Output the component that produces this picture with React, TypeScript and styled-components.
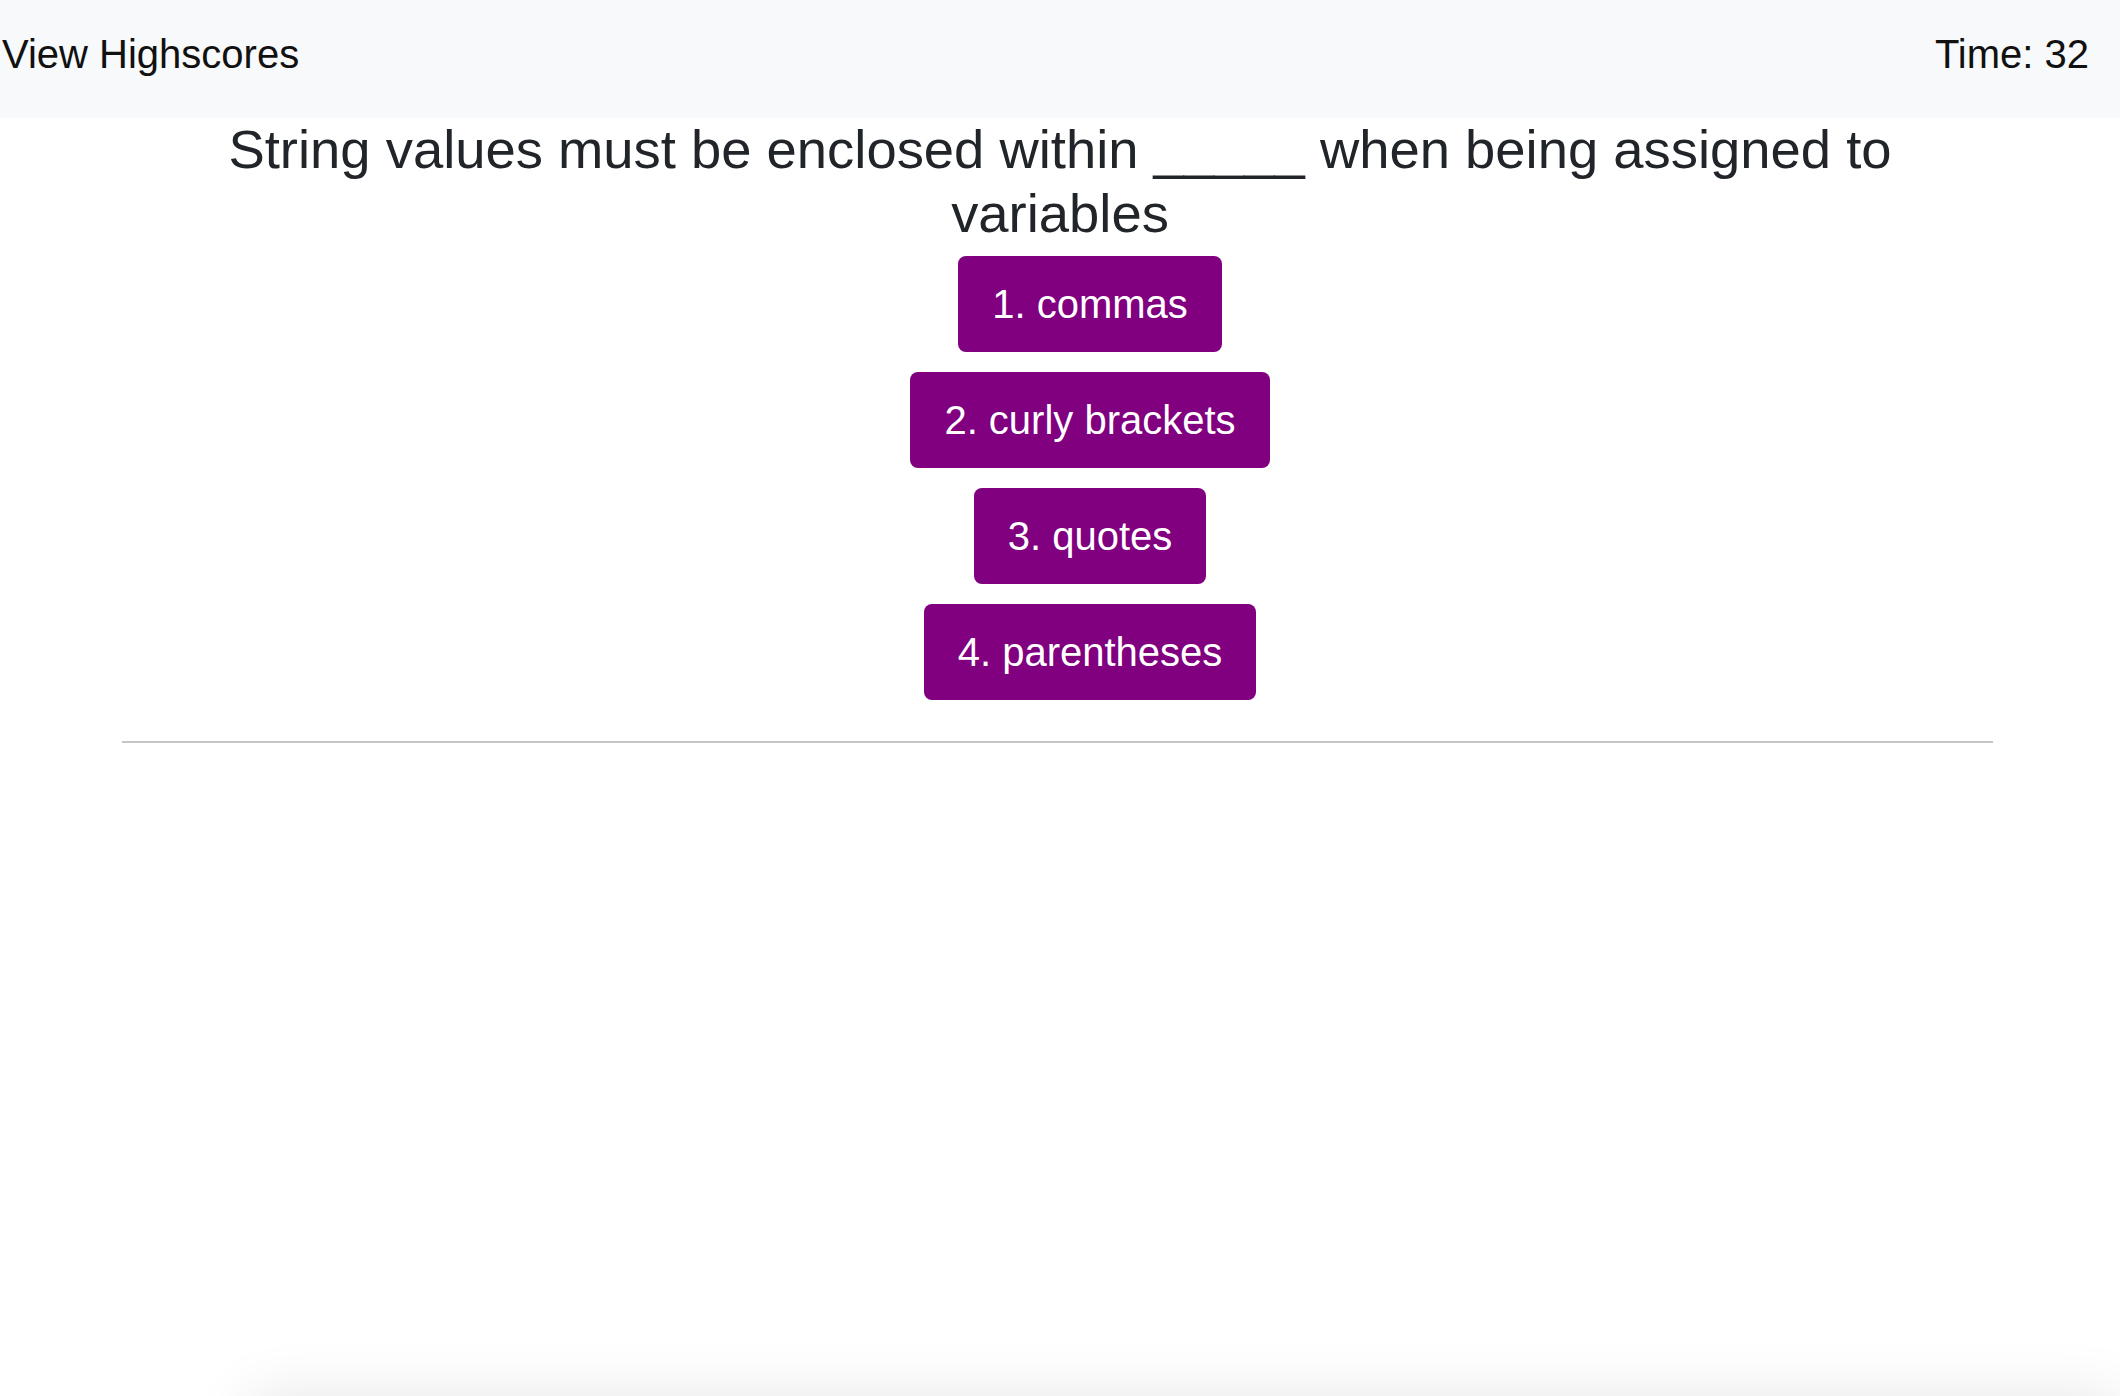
import React from "react";
import styled, { createGlobalStyle } from "styled-components";

const GlobalStyle = createGlobalStyle`
  html, body {
    margin: 0;
    padding: 0;
    background: #ffffff;
  }
  body {
    font-family: "Liberation Sans", Arial, Helvetica, sans-serif;
    color: #212529;
  }
  * { box-sizing: border-box; }
`;

const Page = styled.div`
  display: flex;
  flex-direction: column;
  width: 100%;
`;

const TopBar = styled.header`
  display: flex;
  justify-content: space-between;
  align-items: flex-start;
  height: 118px;
  padding: 31px 31px 0 2px;
  background: #f8f9fa;
  font-size: 40px;
  color: #111111;
`;

const BarLink = styled.span`
  line-height: 46px;
  cursor: pointer;
`;

const Timer = styled.span`
  line-height: 46px;
`;

const Main = styled.main`
  display: flex;
  flex-direction: column;
  align-items: center;
`;

const Question = styled.h1`
  margin: 0 0 10px;
  font-size: 54.4px;
  font-weight: 400;
  line-height: 64px;
  text-align: center;
  color: #212529;
  max-width: 1720px;
`;

const Choices = styled.ol`
  list-style: none;
  margin: 0;
  padding: 0 0 0 60px;
  display: flex;
  flex-direction: column;
  align-items: center;
  gap: 20px;
`;

const Choice = styled.li`
  display: flex;
  justify-content: center;
`;

const ChoiceButton = styled.button`
  font-family: "Liberation Sans", Arial, Helvetica, sans-serif;
  font-size: 40px;
  line-height: 46px;
  color: #ffffff;
  background: #800080;
  border: none;
  border-radius: 8px;
  padding: 25px 34px;
  cursor: pointer;
`;

const Divider = styled.hr`
  align-self: stretch;
  margin: 41px 127px 0 122px;
  border: none;
  border-top: 2px solid #c6c6c6;
  height: 0;
`;

const ShadowEdge = styled.div`
  position: fixed;
  left: 250px;
  right: 0;
  top: 100vh;
  height: 120px;
  background: #ffffff;
  box-shadow: 0 0 60px rgba(0, 0, 0, 0.1);
  pointer-events: none;
`;

const choices = ["1. commas", "2. curly brackets", "3. quotes", "4. parentheses"];

export default function App() {
  return (
    <Page>
      <GlobalStyle />
      <TopBar>
        <BarLink>View Highscores</BarLink>
        <Timer>Time: 32</Timer>
      </TopBar>
      <Main>
        <Question>
          String values must be enclosed within _____ when being assigned to variables
        </Question>
        <Choices>
          {choices.map((c) => (
            <Choice key={c}>
              <ChoiceButton>{c}</ChoiceButton>
            </Choice>
          ))}
        </Choices>
        <Divider />
      </Main>
      <ShadowEdge />
    </Page>
  );
}
